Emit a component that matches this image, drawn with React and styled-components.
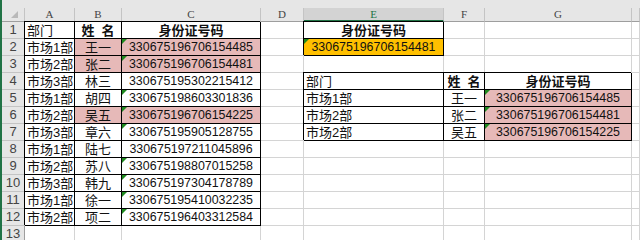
import React from "react";
import styled, { createGlobalStyle, css } from "styled-components";

const Global = createGlobalStyle`
  html, body { margin: 0; padding: 0; background: #fff; overflow: hidden; }
  body { width: 640px; height: 240px; }
`;

const Frame = styled.div`
  width: 640px;
  height: 240px;
  overflow: hidden;
  border-left: 2px solid #217346;
  box-sizing: border-box;
  background: #fff;
`;

const TopStrip = styled.div`
  height: 8px;
  background: #e6e6e6;
`;

const Sheet = styled.div`
  display: grid;
  grid-template-columns: 23px 50px 47px 139px 43px 140px 41px 147px 1fr;
  grid-template-rows: 14px;
  grid-auto-rows: 17px;
  font-family: "Liberation Sans", "Noto Sans CJK SC", sans-serif;
  font-size: 13px;
  color: #111;
`;

const Corner = styled.div`
  position: relative;
  background: #e6e6e6;
  border-right: 1px solid #c4c4c4;
  border-bottom: 1px solid #9e9e9e;
  box-sizing: border-box;
`;

const CornerMark = styled.svg`
  position: absolute;
  right: 6px;
  bottom: 3px;
`;

const ColHead = styled.div`
  background: ${(p) => (p.$active ? "#d3d3d3" : "#e6e6e6")};
  color: ${(p) => (p.$active ? "#217346" : "#444")};
  border-right: 1px solid #c4c4c4;
  border-bottom: ${(p) => (p.$active ? "2px solid #217346" : "1px solid #9e9e9e")};
  box-sizing: border-box;
  display: flex;
  align-items: center;
  justify-content: center;
  font-family: "Liberation Serif", serif;
  font-size: 11px;
  line-height: 11px;
`;

const RowHead = styled.div`
  background: #e6e6e6;
  color: #444;
  border-right: 1px solid #9e9e9e;
  border-bottom: 1px solid #c4c4c4;
  box-sizing: border-box;
  display: flex;
  align-items: flex-end;
  justify-content: center;
  padding-bottom: 1px;
  font-size: 13px;
  line-height: 14px;
`;

const Cell = styled.div`
  position: relative;
  box-sizing: border-box;
  background: ${(p) => p.$fill || "#fff"};
  border-right: 1px solid ${(p) => (p.$boxed ? "#000" : "#d4d4d4")};
  border-bottom: 1px solid ${(p) => (p.$boxed ? "#000" : "#d4d4d4")};
  ${(p) =>
    p.$boxed &&
    css`
      box-shadow: -1px -1px 0 0 #000;
    `}
  display: flex;
  align-items: flex-end;
  justify-content: ${(p) =>
    p.$align === "center" ? "center" : p.$align === "right" ? "flex-end" : "flex-start"};
  padding: 0 2px 0 2px;
  font-weight: ${(p) => (p.$bold ? 700 : 400)};
  font-size: ${(p) => (p.$num ? "12.4px" : "13px")};
  line-height: 15px;
  white-space: pre;
  overflow: visible;
  ${(p) =>
    p.$tri &&
    css`
      &::before {
        content: "";
        position: absolute;
        top: 0;
        left: 0;
        border-top: 5px solid #1f8a1f;
        border-right: 5px solid transparent;
      }
    `}
`;

const PINK = "#e6b9b8";
const ORANGE = "#ffc000";

const COLS = ["A", "B", "C", "D", "E", "F", "G", "H"];

const people = [
  ["市场1部", "王一", "330675196706154485", true, true],
  ["市场2部", "张二", "330675196706154481", true, true],
  ["市场3部", "林三", "330675195302215412", false, false],
  ["市场1部", "胡四", "330675198603301836", false, true],
  ["市场2部", "吴五", "330675196706154225", true, true],
  ["市场3部", "章六", "330675195905128755", false, true],
  ["市场1部", "陆七", "330675197211045896", false, false],
  ["市场2部", "苏八", "330675198807015258", false, true],
  ["市场3部", "韩九", "330675197304178789", false, true],
  ["市场1部", "徐一", "330675195410032235", false, true],
  ["市场2部", "项二", "330675196403312584", false, true],
];

const cells = {};
cells.A1 = { v: "部门", boxed: true };
cells.B1 = { v: "姓  名", bold: true, align: "center", boxed: true };
cells.C1 = { v: "身份证号码", bold: true, align: "center", boxed: true };
people.forEach(([dept, name, id, pink, tri], i) => {
  const r = i + 2;
  cells["A" + r] = { v: dept, boxed: true };
  cells["B" + r] = { v: name, align: "center", boxed: true, fill: pink ? PINK : null };
  cells["C" + r] = { v: id, align: "center", boxed: true, num: true, tri, fill: pink ? PINK : null };
});
cells.E1 = { v: "身份证号码", bold: true, align: "center", boxed: true };
cells.E2 = { v: "330675196706154481", align: "center", boxed: true, num: true, tri: true, fill: ORANGE };
cells.E4 = { v: "部门", boxed: true };
cells.F4 = { v: "姓  名", bold: true, align: "center", boxed: true };
cells.G4 = { v: "身份证号码", bold: true, align: "center", boxed: true };
[
  ["市场1部", "王一", "330675196706154485"],
  ["市场2部", "张二", "330675196706154481"],
  ["市场2部", "吴五", "330675196706154225"],
].forEach(([dept, name, id], i) => {
  const r = i + 5;
  cells["E" + r] = { v: dept, boxed: true };
  cells["F" + r] = { v: name, align: "center", boxed: true };
  cells["G" + r] = { v: id, align: "center", boxed: true, num: true, tri: true, fill: PINK };
});

export default function App() {
  const rows = [];
  for (let r = 1; r <= 13; r++) {
    rows.push(<RowHead key={"rh" + r}>{r}</RowHead>);
    COLS.forEach((c) => {
      const d = cells[c + r] || {};
      rows.push(
        <Cell
          key={c + r}
          $fill={d.fill}
          $bold={d.bold}
          $align={d.align}
          $boxed={d.boxed}
          $tri={d.tri}
          $num={d.num}
        >
          {d.v}
        </Cell>
      );
    });
  }
  return (
    <Frame>
      <Global />
      <TopStrip />
      <Sheet>
        <Corner>
          <CornerMark width="7" height="7" viewBox="0 0 7 7">
            <polygon points="7,0 7,7 0,7" fill="#b9b9b9" />
          </CornerMark>
        </Corner>
        {COLS.map((c) => (
          <ColHead key={c} $active={c === "E"}>
            {c === "H" ? "" : c}
          </ColHead>
        ))}
        {rows}
      </Sheet>
    </Frame>
  );
}
